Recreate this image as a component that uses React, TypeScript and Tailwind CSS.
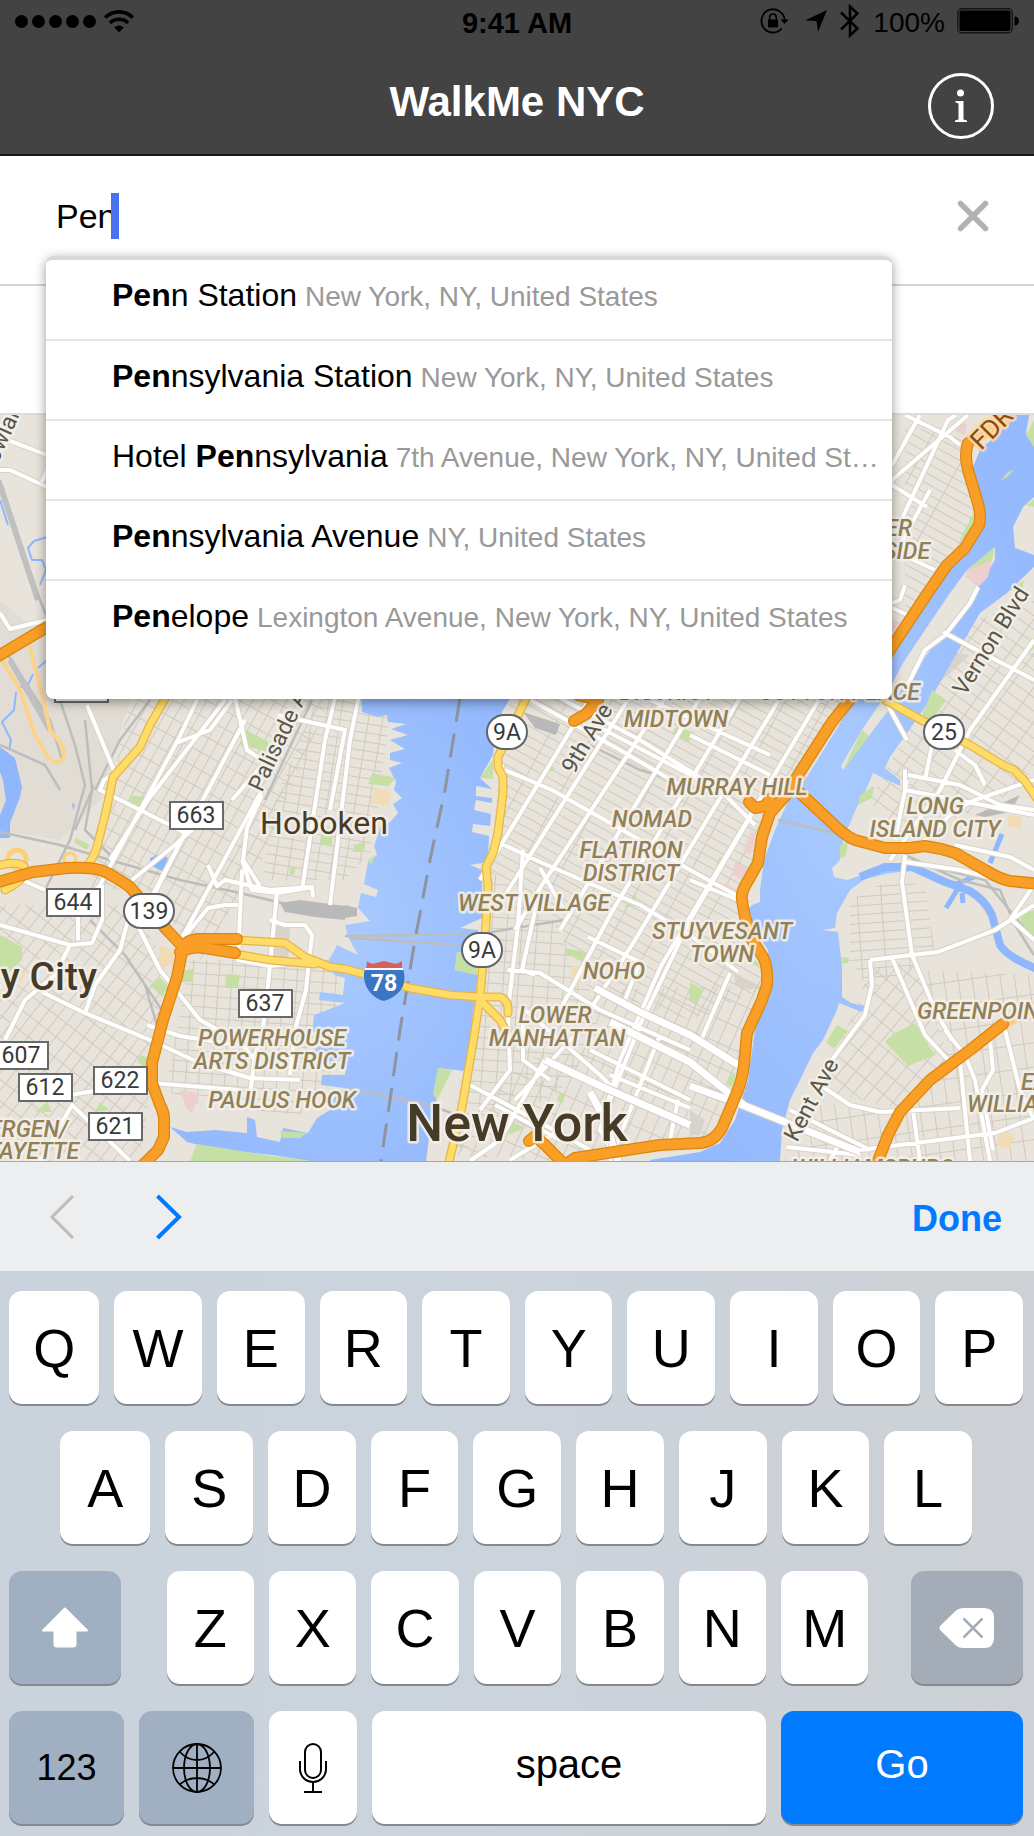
import React, { useState } from "react";

const HELV = "font-['Liberation_Sans',Arial,sans-serif]";

/* ---------- status bar ---------- */

function StatusBar() {
  return (
    <div className="grid grid-cols-3 items-center h-[42px] px-[15px] text-[28px] leading-none text-black">
      <div className="flex items-center gap-2">
        <div className="flex gap-1">
          {[0, 1, 2, 3, 4].map((n) => (
            <span key={n} className="w-[13px] h-[13px] rounded-full bg-black" />
          ))}
        </div>
        <svg width="30" height="23" viewBox="0 0 30 23" aria-label="Wi-Fi">
          <g fill="none" stroke="#000" strokeWidth="3.6">
            <path d="M1.2 7.6a19.5 19.5 0 0 1 27.6 0" />
            <path d="M6 13a12.8 12.8 0 0 1 18 0" />
          </g>
          <path d="M15 22.5l-4.8-5a7 7 0 0 1 9.6 0z" />
        </svg>
      </div>
      <div className="text-center font-bold text-[29px] pt-1">9:41 AM</div>
      <div className="flex items-center justify-end gap-3">
        <svg width="29" height="26" viewBox="0 0 29 26" aria-label="Rotation lock">
          <path d="M21.8 20.5A11.6 11.6 0 1 1 24.6 12" fill="none" stroke="#000" strokeWidth="1.8" />
          <path d="M20.5 11.6h8l-4 4.4z" />
          <path d="M8 11.5h10v8H8z" />
          <path d="M9.7 12V9.3a3.3 3.3 0 0 1 6.6 0V12" fill="none" stroke="#000" strokeWidth="1.6" />
        </svg>
        <svg className="ml-1" width="22" height="22" viewBox="0 0 22 22" aria-label="Location">
          <path d="M22 0L13 22L11.5 11L0 10.5z" />
        </svg>
        <svg width="22" height="34" viewBox="0 0 22 34" aria-label="Bluetooth">
          <path d="M2 8.5L18.5 24.5L11 31.5V2.5L18.5 9.5L2 25.5" fill="none" stroke="#000" strokeWidth="2.5" />
        </svg>
        <span className="pt-1">100%</span>
        <svg width="62" height="26" viewBox="0 0 62 26" aria-label="Battery">
          <rect x="0.75" y="0.75" width="54.5" height="24" rx="4" fill="none" stroke="#151515" strokeWidth="1.3" />
          <rect x="2.5" y="2.5" width="51" height="20.5" rx="2" />
          <path d="M57.5 8.5a4.5 4.5 0 0 1 0 9z" />
        </svg>
      </div>
    </div>
  );
}

/* ---------- suggestions ---------- */

type Suggestion = { pre: string; hit: string; post: string; place: string };

const SUGGESTIONS: Suggestion[] = [
  { pre: "", hit: "Pen", post: "n Station", place: "New York, NY, United States" },
  { pre: "", hit: "Pen", post: "nsylvania Station", place: "New York, NY, United States" },
  { pre: "Hotel ", hit: "Pen", post: "nsylvania", place: "7th Avenue, New York, NY, United States" },
  { pre: "", hit: "Pen", post: "nsylvania Avenue", place: "NY, United States" },
  { pre: "", hit: "Pen", post: "elope", place: "Lexington Avenue, New York, NY, United States" },
];

function Suggestions() {
  return (
    <ul className="absolute z-10 left-[46px] right-[142px] top-[100px] pb-10 bg-white rounded-lg border-t-4 border-[#d9d9d9] shadow-[0_3px_12px_rgba(0,0,0,0.4)]">
      {SUGGESTIONS.map((s, i) => (
        <li key={i} className={i ? "border-t-2 border-[#e4e4e4]" : ""}>
          <button
            className={
              "flex items-baseline gap-2 w-full text-left pl-[66px] pr-2 text-[32px] leading-[70px] text-black " +
              (i ? "h-[78px]" : "h-[79px]")
            }
          >
            <span className="shrink-0 whitespace-pre">
              {s.pre}
              <b>{s.hit}</b>
              {s.post}
            </span>
            <span className="min-w-0 truncate text-[28px] text-[#999]">{s.place}</span>
          </button>
        </li>
      ))}
    </ul>
  );
}

/* ---------- map data ---------- */

const HUDSON =
  "M361 690L362 712L378 717L387 715L388 722L406 724L391 729L408 735L390 740L405 749L390 753L390 760L402 763L389 768L396 782L394 790L402 798L393 804L398 813L390 822L380 828L374 846L377 855L368 862L364 884L378 890L376 897L361 893L358 908L370 921L345 925L348 937L358 955L337 945L329 960L334 975L345 978L343 995L320 992L319 1000L345 1003L314 1015L312 1032L345 1028V1040L322 1045L312 1052L313 1062L345 1060V1075L322 1075L321 1085L345 1088L334 1098L330 1110L317 1118L308 1133L283 1128L280 1142L257 1137L255 1120L247 1117V1133L215 1130L187 1132L170 1127L187 1142L210 1148L272 1155L310 1161V1170H425L430 1130L436 1105L438 1068L464 1071L470 1040L441 1052L475 1044L472 1020L478 975L455 970L457 952L478 955L478 930L460 928L482 918L482 870L470 865L488 862L489 836L472 832L473 824L490 826L491 814L474 810L476 800L492 803L492 798L476 796V786L492 789L480 778L493 755L495 735L502 712L515 690Z";

const EAST_RIVER =
  "M985 410L1010 423L980 450L973 467L982 503L983 517L963 547L947 567L920 603L892 653L850 707L807 777L790 797L775 830L764 860L760 890V902L752 905L745 915L768 950L770 985L755 1030L748 1080L735 1120L720 1143L700 1152L650 1160V1170H780V1161L782 1130L790 1100L800 1080L813 1053L823 1040L837 1010L839 1003L862 1012L865 1006L851 1003L842 997V967L838 932L822 930L835 928L837 913L850 890L865 879L890 873L912 871L912 864L888 866L865 874L847 880L834 877L832 868L840 860L843 840L850 823L860 800L866 790L873 773L900 786V780L885 768L890 757L907 733L930 700L957 653L980 613L1007 593L1034 567V555L1015 548L1013 527L1023 507L1034 497V445L1026 433L1030 410Z";

const ROOSEVELT =
  "M995 547V560L978 587L965 605L943 633L923 660L903 687L887 712L843 770L841 766L862 730L887 693L903 663L927 627L950 593L967 570Z";

const PARKS = [
  "M995 547L992 560L972 574L967 570Z",
  "M862 730L869 736L843 770Z",
  "M932 690L946 700L930 722L922 716Z",
  "M0 935L22 947V960L5 975L0 970Z",
  "M246 730L268 742L270 752L240 745Z",
  "M130 795L145 797L140 808L129 803Z",
  "M76 838L90 845L86 850L74 842Z",
  "M160 978L168 986L162 997L150 985Z",
  "M184 970L193 969V982H182Z",
  "M226 974L240 975L238 988H225Z",
  "M140 1055L150 1058L146 1068L138 1062Z",
  "M100 1102L109 1110L95 1112Z",
  "M47 1102L52 1112L36 1112Z",
  "M197 1144L272 1156L310 1161H190Z",
  "M280 1131L307 1133L300 1138L282 1138Z",
  "M372 773L396 778L388 786L368 784Z",
  "M354 845L366 842L363 852L353 852Z",
  "M368 860L376 855L370 866Z",
  "M493 760V779L480 778Z",
  "M457 952L478 955L477 975L455 970Z",
  "M438 1068L452 1070L437 1100L433 1094Z",
  "M565 948L590 953L584 962L566 954Z",
  "M630 900L637 893L633 906L624 908Z",
  "M548 765L555 768L551 772L546 769Z",
  "M560 1092L565 1096L562 1104L557 1100Z",
  "M637 1100L646 1104L640 1109L635 1106Z",
  "M508 1120L525 1128L510 1134L503 1130Z",
  "M690 982L704 990L696 1003L689 1000Z",
  "M730 1073L735 1076L733 1088L726 1084Z",
  "M720 856L725 860L721 869L716 865Z",
  "M915 1023L926 1042L935 1055L908 1066L885 1042L893 1034Z",
  "M837 1025L848 1031L834 1049L826 1042Z",
  "M860 795L874 786L872 798L858 805Z",
  "M848 840L846 856L840 858V846Z",
  "M1020 915L1034 910V937L1022 930Z",
  "M841 957L849 958L848 963L842 963Z",
  "M975 510L963 533L960 540L972 536Z",
  "M1034 420V447L1026 435Z",
  "M1034 500V507L1026 505Z",
  "M1010 590L1024 580L1022 592Z",
  "M1024 650L1034 637V648L1030 652Z",
  "M1008 472L1014 470L1006 478L1001 480Z",
  "M322 836H332V845H320Z",
  "M291 866L296 867L294 875L289 874Z",
  "M677 726L695 733L689 742L672 734Z",
  "M755 960L760 965H752Z",
].join("");

const PINK =
  "M967 570L992 560L988 577L978 587L966 577ZM955 421L967 424L965 435L953 430ZM752 830L756 840L750 855L744 850ZM735 862L748 868L742 880L732 874ZM725 883L738 890L733 898L722 892ZM180 1090L199 1093L192 1113L186 1108ZM892 620L900 622L892 634Z";

const SAND =
  "M160 945L178 952L172 965L158 970ZM376 788L392 792L388 806L370 803ZM572 965L586 970L580 985L570 990ZM1000 1130L1015 1135L1010 1150L997 1146ZM1008 815L1022 817V828L1008 826ZM18 970L26 972L20 984Z";

const MAJOR_STREETS = [
  // Jersey City and Hoboken
  "M0 437L47 455M10 435L0 425M0 470L10 470L47 487M47 470L42 482M0 613L10 629L47 620",
  "M87 705L115 773L104 780L100 790L170 825L185 833M235 698L247 750L265 762L232 800",
  "M197 700L178 740L100 885L82 905M232 700L210 730L176 743M245 720L150 900M225 700L148 800L110 860M212 812L175 845L132 880M185 833L155 893",
  "M262 790L182 938L190 930L208 908L225 905L238 905M208 865L217 886L225 880L270 890L312 887L313 897M335 698L325 740L302 890M360 690L350 740L330 905M278 715L345 730L330 810",
  "M277 892L268 985L262 1035L255 1055L250 1095M242 870L238 960L270 966L305 962M270 920L285 925H305L312 935L308 970L306 990L295 1030L290 1075",
  "M242 860L252 890L278 893L313 887M262 795L247 828L243 860L260 886",
  "M0 925L70 945L92 943L102 920V885M70 945L55 975L25 1000L5 1040M135 920L160 970L200 1020L240 1042L255 1060",
  "M42 992L85 1013L150 1040L200 1063L250 1078L300 1080M85 1013L95 985L120 950L128 920",
  "M152 1083L240 1090M147 1025L180 1036L230 1044M60 1102L70 1095L100 1090M40 1161L72 1105L130 1161M22 880L45 890M78 906V940",
  // Manhattan avenues
  "M590 698L480 880M629 698L502 900M665 698L540 888L522 970M700 698L560 930M740 698L610 915L560 1010M780 698L632 945L590 1010M820 698L661 966L620 1060M760 800L690 920L640 1025L610 1100M880 520L892 480L968 415M730 973L699 1045M892 560L930 490M892 540L948 420L956 415M905 585L900 600L892 603M892 465L920 415M905 415L950 437L960 445M892 485L927 507M892 550L935 570M892 608L910 616",
  // Manhattan cross streets
  "M527 698L620 750L680 785M505 770L552 790L640 840L690 870L745 900M500 843L540 862L640 905L690 935L738 972M560 698L640 740L720 790L755 825M502 765L505 790M595 725L700 780M650 700L770 755M690 735L770 775M690 880L750 905",
  // Village and downtown
  "M523 850L518 925L508 1010M540 888L515 930M540 868L565 912M508 970L540 973L600 1010L690 1050M522 970L535 975M588 937L640 962L625 1000M525 1010L600 1075L620 1095M508 1015L510 1070L480 1110M523 1015L523 1060L550 1080M470 1085L545 1125L590 1150M545 1060L500 1140L470 1161M575 1035L515 1100M590 1050L690 1100M620 1060L600 1130L618 1161M610 1075L690 1108M660 1035L610 1161M678 1100L670 1140M495 1105L560 1140M510 1160L560 1130",
  // Queens and Brooklyn
  "M978 587L970 603L945 635L925 650L910 680L905 690M943 632L973 648L1034 680M1034 640L970 730L960 750L940 790L890 860M885 700L907 740M905 770V790L1034 815M936 725L925 780M955 750L975 765L985 785M908 775L960 785L1000 805L1034 810M907 780L895 840M1034 780L975 800L955 810L920 845",
  "M905 855L902 882L912 955L935 1010L952 1040M905 862L960 870L1000 880M955 845L1010 857L1034 870M870 960L912 955L938 952L995 930L1034 905M870 960L872 985L865 1015L832 1060L820 1085L850 1105L880 1112L960 1108M892 958L925 1035L950 1062M1012 920L1034 940M1010 920L1034 885",
  "M945 1030L965 1055L975 1080L990 1161M960 1060L970 1161M990 1040L993 1070L982 1090L993 1150M1005 1030L1020 1090L1034 1120M860 1150L995 1133L1034 1118M913 1110L920 1161M790 1110L870 1150M787 1147L860 1155M840 1142L830 1161",
].join("");

const WIDE_STREETS =
  "M690 1086L740 1104L860 1152M545 1060L605 1088L690 1125M595 988L640 1012L690 1035L740 1066M610 1022L690 1062L745 1106M590 1092L605 1120L618 1161";

const RAILS = [
  "M0 480L15 530L40 600L50 625",
  "M8 655L50 720L62 760M60 700L75 745L85 785L70 840L45 890M85 720L92 790L75 830M93 785L85 830L110 855",
  "M0 832L60 845L110 860L180 880L240 893L290 905",
  "M90 920L125 955L145 985L165 1015M145 985L160 1035L145 1070L160 1120M0 745L45 765L60 790",
  "M150 700L120 740L95 790M312 700L265 800",
  "M590 745L640 770L690 785",
  "M905 855L960 880L1000 890L1015 925L1034 955M925 865L985 880L1034 940M905 848L870 848",
  "M345 936L480 934L570 919M350 938L460 945M345 1088L430 1105L470 1120",
  "M778 820L835 833",
].join("");

const ORANGE = [
  "M-5 883L33 872L67 868Q90 867 100 870T130 887L147 907L167 930L183 947L177 977L163 1020L152 1063V1083L160 1105Q165 1113 164 1125V1137L158 1150L147 1161L135 1172",
  "M183 947Q188 939 199 939L237 939",
  "M180 952Q192 946 205 948L235 953",
  "M-5 658L47 627",
  "M968 443Q964 455 968 470L977 500Q982 515 979 525L965 548L947 565L925 597L880 665L848 702L832 722L800 772L786 795L770 813L762 837L758 863L745 886Q741 893 742 900L745 917L752 940L763 957Q768 965 767 985L762 1000L747 1033L744 1065Q742 1080 738 1090L722 1128Q714 1142 700 1143L660 1145L575 1158L560 1168",
  "M566 1166L545 1145L535 1136L529 1141",
  "M799 792L830 821Q845 836 855 840L885 848H910L925 846Q940 848 955 853L985 870Q1000 879 1010 881L1040 884",
  "M749 802L755 808L765 806L770 799",
  "M1003 1024L970 1050L930 1080L900 1112L888 1135L876 1166",
  "M574 721L586 714L598 700L578 695",
].join("");

const YELLOW = [
  "M530 690L505 743L498 757V767L503 777V793L498 833L493 853L486 867L488 885L486 923L482 973L480 997L473 1043L462 1107L448 1166",
  "M237 940L285 943L305 957L330 967L345 969L380 978L410 988L450 995L480 997H500Q509 1000 508 1013",
  "M235 954L270 960L315 964M480 1000L500 1020L506 1031",
  "M170 690L150 725L140 747L113 777L107 807L97 847Q93 860 86 866",
  "M885 700L925 722L970 745L1003 765L1014 770L1024 780L1038 800",
  "M0 865Q25 860 25 870T5 890",
].join("");

type Label = { t: string; x: number; y: number; a?: "start" | "middle" | "end" };

const DISTRICTS: Label[] = [
  { t: "UPPER", x: 912, y: 536, a: "end" },
  { t: "EAST SIDE", x: 930, y: 559, a: "end" },
  { t: "SUTTON PLACE", x: 920, y: 700, a: "end" },
  { t: "DISTRICT", x: 668, y: 700 },
  { t: "MIDTOWN", x: 676, y: 727 },
  { t: "MURRAY HILL", x: 737, y: 795 },
  { t: "NOMAD", x: 652, y: 827 },
  { t: "FLATIRON", x: 631, y: 858 },
  { t: "DISTRICT", x: 631, y: 881 },
  { t: "WEST VILLAGE", x: 534, y: 911 },
  { t: "STUYVESANT", x: 722, y: 939 },
  { t: "TOWN", x: 722, y: 962 },
  { t: "NOHO", x: 614, y: 979 },
  { t: "LOWER", x: 555, y: 1023 },
  { t: "MANHATTAN", x: 557, y: 1046 },
  { t: "LONG", x: 935, y: 814 },
  { t: "ISLAND CITY", x: 935, y: 837 },
  { t: "GREENPOINT", x: 917, y: 1019, a: "start" },
  { t: "EAST", x: 1021, y: 1090, a: "start" },
  { t: "WILLIAMSBURG", x: 967, y: 1112, a: "start" },
  { t: "WILLIAMSBURG", x: 873, y: 1176 },
  { t: "POWERHOUSE", x: 272, y: 1046 },
  { t: "ARTS DISTRICT", x: 272, y: 1069 },
  { t: "PAULUS HOOK", x: 282, y: 1108 },
  { t: "BERGEN/", x: 68, y: 1137, a: "end" },
  { t: "LAFAYETTE", x: 79, y: 1159, a: "end" },
];

const STREET_NAMES = [
  { t: "Palisade Ave", x: 262, y: 793, r: -65 },
  { t: "9th Ave", x: 574, y: 775, r: -59 },
  { t: "Vernon Blvd", x: 965, y: 697, r: -58 },
  { t: "Kent Ave", x: 797, y: 1143, r: -62 },
  { t: "Rowland St", x: -8, y: 477, r: -66 },
];

const ROUTES = [
  { t: "663", x: 169, y: 801 },
  { t: "644", x: 46, y: 888 },
  { t: "637", x: 238, y: 989 },
  { t: "607", x: -6, y: 1041 },
  { t: "612", x: 18, y: 1073 },
  { t: "622", x: 93, y: 1066 },
  { t: "621", x: 88, y: 1112 },
  { t: "681", x: 54, y: 674 },
];

const STATE_ROUTES = [
  { t: "139", x: 149, y: 911, w: 50 },
  { t: "9A", x: 507, y: 732, w: 40 },
  { t: "9A", x: 482, y: 950, w: 40 },
  { t: "25", x: 944, y: 732, w: 40 },
];

const GRIDS = [
  { id: "heights", w: 10, h: 16, r: 29, d: "M130 698H330L262 860L200 960L150 890L90 890Z" },
  { id: "hoboken", w: 14, h: 9, r: 9, d: "M318 698H392L372 850L345 880H262L275 800Z" },
  { id: "downtown", w: 13, h: 11, r: 4, d: "M190 960H340L330 1080L300 1115L200 1105L165 1090Z" },
  { id: "jersey", w: 11, h: 17, r: 38, d: "M0 905L130 905L165 960L150 1090L140 1161H0Z" },
  { id: "midtown", w: 38, h: 9, r: 29, d: "M510 698H905V425L968 440L982 515L760 830L745 905L770 985L690 1020L590 990L550 915L490 870L500 760Z" },
  { id: "village", w: 15, h: 11, r: 4, d: "M490 870L550 915L590 990L600 1040L560 1090L445 1161L470 1030Z" },
  { id: "lower", w: 12, h: 22, r: 24, d: "M590 990L770 985L740 1090L715 1135L560 1161L450 1155L520 1060L600 1040Z" },
  { id: "queens", w: 20, h: 11, r: 36, d: "M1034 600V770L1000 800L900 840L870 800L900 745L975 620Z" },
  { id: "greenN", w: 24, h: 9, r: -4, d: "M850 900L890 880L925 885L935 955L870 990L850 960Z" },
  { id: "greenS", w: 12, h: 18, r: 40, d: "M870 970L915 960L950 1060L905 1110L820 1090L838 1050Z" },
  { id: "green", w: 14, h: 24, r: -8, d: "M915 970L1034 975V1161H785L800 1100L905 1110L950 1060Z" },
];

function MapLabel({ t, x, y, a }: Label) {
  return (
    <text x={x} y={y} textAnchor={a ?? "middle"}>
      {t}
    </text>
  );
}

function CityMap() {
  return (
    <svg
      viewBox="0 415 1034 746"
      className="block w-full h-auto font-[Roboto,'Open_Sans',sans-serif]"
      role="img"
      aria-label="Map of New York and Jersey City"
    >
      <defs>
        {GRIDS.map((g) => (
          <pattern
            key={g.id}
            id={g.id}
            width={g.w}
            height={g.h}
            patternUnits="userSpaceOnUse"
            patternTransform={`rotate(${g.r})`}
          >
            <path d={`M0 0H${g.w}M0 0V${g.h}`} stroke="#cfcabf" strokeWidth="2" />
          </pattern>
        ))}
        <radialGradient id="water" cx="0.5" cy="0.5" r="0.6">
          <stop offset="0" stopColor="#a9caff" />
          <stop offset="1" stopColor="#94b9fd" />
        </radialGradient>
      </defs>

      <rect x="0" y="415" width="1034" height="746" fill="#e8e4db" />
      <path d="M0 600L47 640L130 700L100 800L60 840L0 830Z" fill="#e2ddd4" />
      {GRIDS.map((g) => (
        <path key={g.id} d={g.d} fill={`url(#${g.id})`} />
      ))}

      <path
        d="M940 650L970 655L920 700ZM735 975L760 985L750 990L735 985ZM270 920L290 925L288 965L270 960ZM690 1110L705 1120L700 1135L690 1135Z"
        fill="#d8d3cb"
      />

      {/* water */}
      <path d={HUDSON} fill="url(#water)" />
      <path d={EAST_RIVER} fill="url(#water)" />
      <path d={ROOSEVELT} fill="#e8e4db" />
      <path d="M0 747L15 758L22 787L20 797L10 823V838H0V815L6 800L3 780L0 772Z" fill="#8fb7fe" />
      <path d="M150 858L160 854L168 858L164 872L150 865ZM72 802L75 806L73 810Z" fill="#8fb7fe" />
      <g fill="none" stroke="#8fb7fe" strokeLinejoin="round">
        <path
          strokeWidth="8"
          d="M860 877L885 867H912L945 882L970 891Q985 900 992 915L1000 945Q1008 958 1040 970"
        />
        <path strokeWidth="5" d="M950 886L988 872M990 863L1002 834M957 890L946 908M962 893L963 903" />
        <path
          strokeWidth="2"
          d="M0 500L8 525M47 537L34 541L28 548L32 560L42 560L46 570L40 585M47 660L38 668M33 674L28 685L20 687M16 692L14 710L2 722L11 740L9 750"
        />
      </g>

      <path d={PARKS} fill="#c6dfa5" />
      <path d={PINK} fill="#ebd0cd" />
      <path d={SAND} fill="#f0dcb6" />

      {/* rail */}
      <path d={RAILS} fill="none" stroke="#bdbdbd" strokeWidth="2.5" />
      <path d="M0 485L38 600M10 660L50 730" stroke="#c0c0c0" strokeWidth="6" fill="none" />
      <path
        d="M280 903L300 900L345 906V920L315 917L285 912ZM523 712L560 724L556 735L535 728ZM345 905L357 908V916L345 918ZM975 815L1020 795L1010 812L985 817Z"
        fill="#b9b9b9"
      />

      {/* streets */}
      <g fill="none" strokeLinejoin="round">
        <path d={MAJOR_STREETS} stroke="#d9d4c9" strokeWidth="6" />
        <path d={MAJOR_STREETS} stroke="#fff" strokeWidth="4" />
        <path d={WIDE_STREETS} stroke="#d4cfc5" strokeWidth="9" />
        <path d={WIDE_STREETS} stroke="#fff" strokeWidth="7" />
      </g>

      <path
        d="M460 698L445 790L430 860L415 940L400 1030L390 1100L381 1161"
        fill="none"
        stroke="#8e949f"
        strokeWidth="3"
        strokeDasharray="24 12"
      />

      {/* highways */}
      <g fill="none" strokeLinejoin="round" strokeLinecap="round">
        <path
          d="M2 660L20 690L35 735L48 757Q56 766 62 760T58 740L50 730L42 695L30 648"
          stroke="#fbd38a"
          strokeWidth="4"
        />
        <circle cx="17" cy="859" r="9" stroke="#fbd07a" strokeWidth="5" />
        <circle cx="70" cy="859" r="6" stroke="#fbd07a" strokeWidth="3" />
        <path d={YELLOW} stroke="#e5b548" strokeWidth="9" />
        <path d={YELLOW} stroke="#ffdc68" strokeWidth="6.5" />
        <path d="M1038 1005L1003 1024M1005 420L970 443M786 795L800 778" stroke="#fcc98c" strokeWidth="11" />
        <path d={ORANGE} stroke="#dd860e" strokeWidth="12" />
        <path d={ORANGE} stroke="#f99e26" strokeWidth="9.5" />
      </g>

      {/* labels */}
      <g
        stroke="#f4f1ea"
        strokeOpacity="0.85"
        strokeWidth="5"
        strokeLinejoin="round"
        paintOrder="stroke"
      >
        <g fill="#918058" fontSize="23" fontWeight="500" fontStyle="italic">
          {DISTRICTS.map((l, i) => (
            <MapLabel key={i} {...l} />
          ))}
        </g>
        <g fill="#5a5548" fontSize="23">
          {STREET_NAMES.map((s) => (
            <text key={s.t} transform={`translate(${s.x} ${s.y}) rotate(${s.r})`}>
              {s.t}
            </text>
          ))}
        </g>
        <text transform="translate(981 451) rotate(-45)" fontSize="26" fill="#8a4a0c" stroke="#fbd9a8">
          FDR Dr
        </text>
        <g fill="#463b27">
          <text x="324" y="834" fontSize="32" textAnchor="middle">
            Hoboken
          </text>
          <text x="97" y="990" fontSize="39" fontWeight="500" textAnchor="end">
            Jersey City
          </text>
          <text x="517" y="1141" fontSize="52" fontWeight="500" textAnchor="middle">
            New York
          </text>
        </g>
      </g>

      {/* route shields */}
      <g fontSize="23" textAnchor="middle">
        {ROUTES.map((r) => (
          <g key={r.t}>
            <rect x={r.x + 1} y={r.y + 1} width="53" height="27" fill="#fff" stroke="#67696b" strokeWidth="2" />
            <text x={r.x + 27} y={r.y + 22} fill="#38393b">
              {r.t}
            </text>
          </g>
        ))}
        {STATE_ROUTES.map((r, i) => (
          <g key={i}>
            <rect
              x={r.x - r.w / 2}
              y={r.y - 17}
              width={r.w}
              height="34"
              rx="17"
              fill="#fff"
              stroke="#606468"
              strokeWidth="2"
            />
            <text x={r.x} y={r.y + 8} fill="#38393b">
              {r.t}
            </text>
          </g>
        ))}
        <path
          d="M366 968L364 972Q363 983 369 991T384 1001Q394 998 400 991T404 972L402 968Z"
          fill="#3a76c4"
        />
        <path d="M366 970L367 961Q371 965 376 963L384 961L392 963Q397 965 402 961V970Z" fill="#d95f5c" />
        <path d="M365 969H403" stroke="#fff" strokeWidth="2" />
        <text x="384" y="991" fill="#fff" fontWeight="700">
          78
        </text>
      </g>
    </svg>
  );
}

/* ---------- keyboard ---------- */

const KEY =
  "h-[113px] flex items-center justify-center rounded-[13px] shadow-[0_2px_0_#85888c] text-black";
const LETTER = KEY + " basis-0 min-w-0 bg-white text-[54px] leading-none";

function Letters({ keys, wideFirst = false }: { keys: string; wideFirst?: boolean }) {
  return (
    <>
      {keys.split("").map((k, i) => (
        <button key={k} className={LETTER + (wideFirst && i === 0 ? " grow-[103]" : " grow-[100]")}>
          {k}
        </button>
      ))}
    </>
  );
}

function Keyboard() {
  return (
    <div className="flex flex-col gap-[27px] pt-5 pb-3 pl-[9px] pr-[11px] bg-linear-to-r from-[#cad3dd] via-[#cbd3dc] via-45% to-[#cdd1d5]">
      <div className="flex gap-[15px]">
        <Letters keys="QWERTYUIOP" wideFirst />
      </div>
      <div className="flex gap-[15px] px-[51px]">
        <Letters keys="ASDFGHJKL" wideFirst />
      </div>
      <div className="flex">
        <button aria-label="Shift" className={KEY + " w-[11%] bg-[#a0b0c2]"}>
          <svg width="48" height="41" viewBox="0 0 48 41">
            <path
              d="M24 1.5L46 23.5H34.5V37Q34.5 39.5 32 39.5H16Q13.5 39.5 13.5 37V23.5H2Z"
              fill="#fff"
              stroke="#fff"
              strokeWidth="2"
              strokeLinejoin="round"
            />
          </svg>
        </button>
        <div className="flex flex-1 gap-[15px] ml-[46px] mr-[43px]">
          <Letters keys="ZXCVBNM" />
        </div>
        <button aria-label="Delete" className={KEY + " w-[11%] bg-[#a4adb7]"}>
          <svg width="56" height="42" viewBox="0 0 56 42">
            <path
              d="M1.5 18.5L17 3.5Q20 1 24 1H45Q55 1 55 11V31Q55 41 45 41H24Q20 41 17 38.5L1.5 23.5Q-0.5 21 1.5 18.5Z"
              fill="#fff"
            />
            <path d="M24.5 11.5L43.5 30.5M43.5 11.5L24.5 30.5" stroke="#a4adb7" strokeWidth="2.5" />
          </svg>
        </button>
      </div>
      <div className="flex gap-[15px]">
        <button className={KEY + " grow-[115] basis-0 min-w-0 bg-[#a0b0c2] text-[36px]"}>123</button>
        <button aria-label="Next keyboard" className={KEY + " grow-[115] basis-0 min-w-0 bg-[#a0b0c2]"}>
          <svg width="50" height="50" viewBox="0 0 50 50" fill="none" stroke="#000" strokeWidth="1.8">
            <circle cx="25" cy="25" r="24" />
            <ellipse cx="25" cy="25" rx="13" ry="24" />
            <path d="M25 1V49M1 25H49M7.5 8.5Q15 17 25 17T42.5 8.5M7.5 41.5Q15 35 25 35T42.5 41.5" />
          </svg>
        </button>
        <button aria-label="Dictation" className={KEY + " grow-[88] basis-0 min-w-0 bg-white"}>
          <svg width="28" height="50" viewBox="0 0 28 50" fill="none" stroke="#000" strokeWidth="2">
            <rect x="6" y="1" width="16" height="34" rx="8" />
            <path d="M1 18V26A13 13 0 0 0 27 26V18M14 39V49M5 49H23" />
          </svg>
        </button>
        <button className={KEY + " grow-[394] basis-0 min-w-0 bg-white text-[40px] pb-2"}>space</button>
        <button className={KEY + " grow-[242] basis-0 min-w-0 bg-[#007aff] text-[40px] pb-2 text-white"}>Go</button>
      </div>
    </div>
  );
}

/* ---------- page ---------- */

export default function App() {
  const [query, setQuery] = useState("Pen");
  return (
    <div className={"w-full overflow-hidden bg-white " + HELV}>
      <header className="bg-[#434343] border-b-2 border-[#1a1718]">
        <StatusBar />
        <div className="relative flex items-center justify-center h-[112px]">
          <h1 className="text-[42px] leading-none font-bold text-white pt-2">WalkMe NYC</h1>
          <button
            aria-label="Information"
            className="absolute right-10 top-[31px] w-[66px] h-[66px] rounded-full border-[3px] border-white"
          >
            <svg className="mx-auto" width="14" height="34" viewBox="0 0 14 34" fill="#fff">
              <circle cx="6.5" cy="4" r="3.5" />
              <path d="M1.5 12H9.5V30.5L13 31.5V33H1V31.5L4.5 30.5V14.5L1.5 13.5Z" />
            </svg>
          </button>
        </div>
      </header>

      <section className="relative">
        <div className="flex items-center h-[130px] pl-14 pr-[45px] pb-2 border-b-2 border-[#d6d6d6]">
          <div className="relative flex-1 min-w-0">
            <input
              aria-label="Start"
              value={query}
              onChange={(e) => setQuery(e.target.value)}
              className="block w-full h-[46px] text-[34px] leading-none text-black outline-none"
            />
            <span className="absolute left-[55px] top-0 w-2 h-[46px] bg-[#4a72f0]" />
          </div>
          <button aria-label="Clear">
            <svg width="32" height="32" viewBox="0 0 32 32">
              <path d="M3.5 3.5L28.5 28.5M28.5 3.5L3.5 28.5" stroke="#b2b2b2" strokeWidth="5.5" strokeLinecap="round" />
            </svg>
          </button>
        </div>
        <input aria-label="Destination" className="block w-full h-[129px] px-14 text-[34px] border-b-2 border-[#dcdcdc] outline-none" />
        <Suggestions />
        <CityMap />
      </section>

      <div className="flex items-center h-[110px] pl-[49px] pr-8 border-t border-[#a5a7a9] bg-[#edeef0]">
        <button aria-label="Previous field">
          <svg width="26" height="46" viewBox="0 0 26 46">
            <path d="M24 2L3 23L24 44" fill="none" stroke="#bcbcbc" strokeWidth="3" />
          </svg>
        </button>
        <button aria-label="Next field" className="ml-20">
          <svg width="28" height="46" viewBox="0 0 28 46">
            <path d="M2.5 2L24 23L2.5 44" fill="none" stroke="#007aff" strokeWidth="4" />
          </svg>
        </button>
        <button className="ml-auto pt-1 text-[36px] leading-none font-bold text-[#007aff]">Done</button>
      </div>

      <Keyboard />
    </div>
  );
}
